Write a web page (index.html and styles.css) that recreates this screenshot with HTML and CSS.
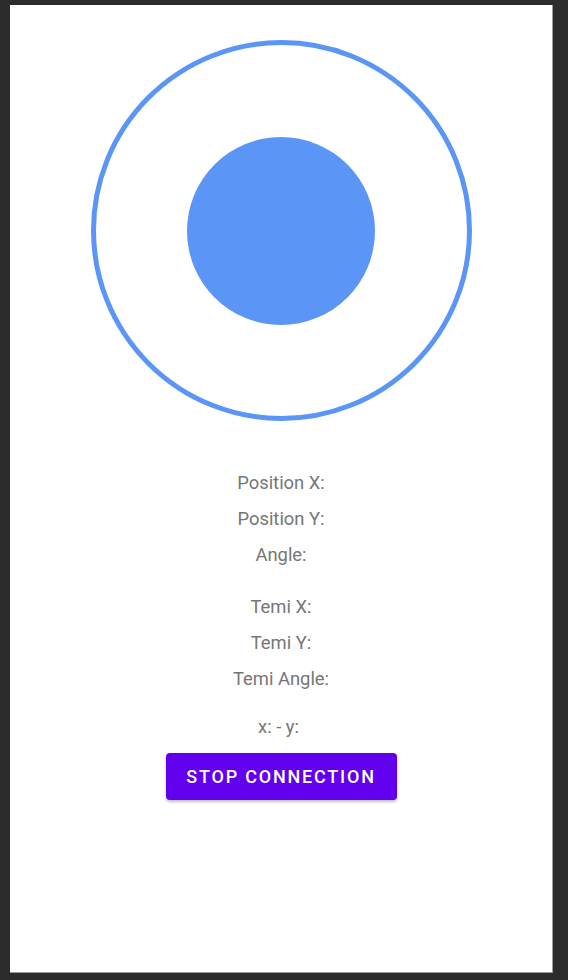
FILE: index.html
```html
<!DOCTYPE html>
<html>
<head>
<meta charset="utf-8">
<link rel="stylesheet" href="styles.css">
</head>
<body>
<div class="frame">
  <div class="joystick">
    <div class="knob"></div>
  </div>
  <div class="info">
    <div class="group">
      <div class="line">Position X:</div>
      <div class="line">Position Y:</div>
      <div class="line">Angle:</div>
    </div>
    <div class="group group-temi">
      <div class="line">Temi X:</div>
      <div class="line">Temi Y:</div>
      <div class="line">Temi Angle:</div>
    </div>
    <div class="line xy">x: - y:</div>
    <button class="btn">STOP CONNECTION</button>
  </div>
</div>
</body>
</html>
```
FILE: styles.css
```css
html, body {
  margin: 0;
  padding: 0;
  background: #2c2c2c;
}
body {
  width: 568px;
  height: 980px;
  overflow: hidden;
  font-family: Roboto, "Liberation Sans", sans-serif;
}
.frame {
  box-sizing: border-box;
  margin: 5px 0 0 10px;
  width: 543px;
  height: 968px;
  background: #ffffff;
  border-right: 1px solid #9a9a9a;
  border-bottom: 1px solid #9a9a9a;
  display: flex;
  flex-direction: column;
  align-items: center;
  padding-top: 35px;
}
.joystick {
  box-sizing: border-box;
  width: 381px;
  height: 381px;
  border: 5px solid #5b95f6;
  border-radius: 50%;
  display: flex;
  align-items: center;
  justify-content: center;
}
.knob {
  width: 188px;
  height: 188px;
  border-radius: 50%;
  background: #5b95f6;
}
.info {
  margin-top: 44px;
  display: flex;
  flex-direction: column;
  align-items: center;
}
.group {
  display: flex;
  flex-direction: column;
  align-items: center;
}
.group-temi {
  margin-top: 16px;
}
.line {
  font-size: 18.4px;
  line-height: 36px;
  color: #767676;
}
.xy {
  margin-top: 12px;
  margin-right: 5px;
}
.btn {
  margin-top: 8px;
  width: 231px;
  height: 47px;
  border: none;
  border-radius: 4px;
  background: #6200ee;
  color: #ffffff;
  font-family: Roboto, "Liberation Sans", sans-serif;
  font-weight: 500;
  font-size: 18px;
  letter-spacing: 1.8px;
  box-shadow: 0 2px 3px rgba(0,0,0,0.25);
  padding: 0;
}
```
